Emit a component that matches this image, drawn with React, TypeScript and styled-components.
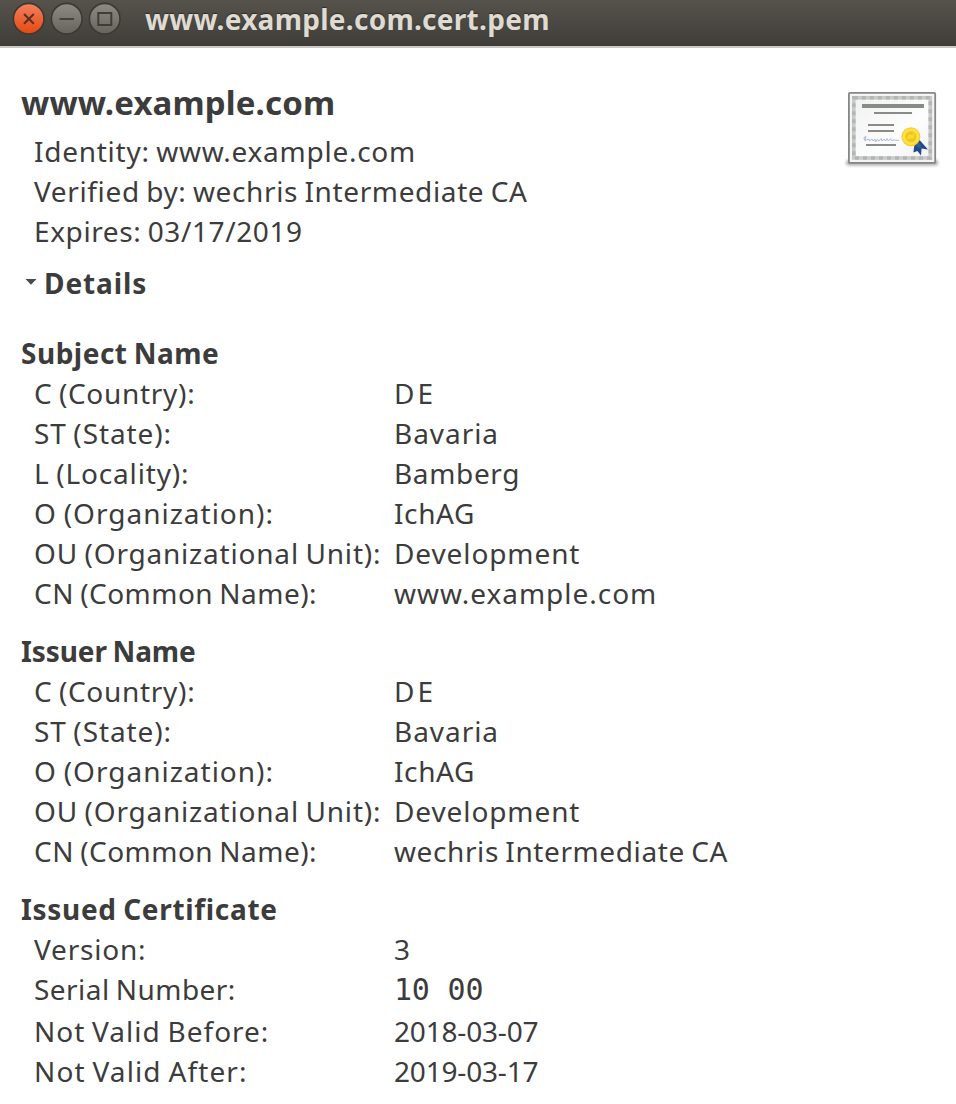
import React from "react";
import styled, { createGlobalStyle } from "styled-components";

const GlobalStyle = createGlobalStyle`
  *, *::before, *::after { box-sizing: border-box; }
  body {
    margin: 0;
    background: #fff;
    color: #3c3c3c;
    font-family: "Noto Sans", "Open Sans", sans-serif;
  }
`;

const Window = styled.div`
  height: 100vh;
  overflow: hidden;
  display: flex;
  flex-direction: column;
  background: #fff;
`;

const TitleBar = styled.header`
  flex: none;
  height: 48px;
  display: flex;
  align-items: flex-start;
  padding: 2px 0 0 12px;
  background: linear-gradient(#56534c, #3f3d38);
  border-bottom: 2px solid #cbc7c4;
`;

const Controls = styled.div`
  display: flex;
  gap: 5px;
`;

const WindowTitle = styled.h1`
  margin: 0 0 0 24px;
  font-size: 28px;
  font-weight: 700;
  line-height: 35px;
  letter-spacing: 0.27px;
  color: #dfdbd2;
  text-shadow: 0 -1px 1px #2d2c28;
  white-space: nowrap;
`;

const Content = styled.main`
  flex: 1;
  padding: 32px 20px 0;
`;

const Summary = styled.div`
  display: flex;
  justify-content: space-between;
`;

const Heading = styled.h2`
  margin: 0 0 6px;
  padding: 1px 0 0 1px;
  font-size: 33px;
  line-height: 44px;
  font-weight: 700;
  letter-spacing: 0.13px;
`;

const CertificatePicture = styled.svg`
  flex: none;
  margin: 8px -4px 0 0;
`;

const Line = styled.div`
  padding-left: 14px;
  line-height: 40px;
  font-size: 28px;
`;

const Text = styled.span<{ $tracking?: number }>`
  letter-spacing: ${(p) => p.$tracking ?? 0}px;
  word-spacing: -1.5px;
  white-space: pre;
`;

const Disclosure = styled.div`
  display: flex;
  align-items: center;
  gap: 7px;
  margin: 12px 0 30px;
  padding-left: 5px;
  height: 40px;
`;

const Arrow = styled.svg`
  flex: none;
  margin-top: -3px;
`;

const DisclosureLabel = styled.span`
  font-size: 28px;
  line-height: 40px;
  font-weight: 700;
  letter-spacing: 0.9px;
`;

const Section = styled.section`
  margin-bottom: 18px;
`;

const SectionTitle = styled.h3`
  margin: 0;
  padding-left: 1px;
  font-size: 28px;
  line-height: 40px;
  font-weight: 700;
`;

const Field = styled.div<{ $height?: number }>`
  display: grid;
  grid-template-columns: 360px 1fr;
  align-items: baseline;
  height: ${(p) => p.$height ?? 40}px;
  padding-left: 14px;
  font-size: 28px;
  line-height: 40px;
`;

const Mono = styled(Text)`
  font-family: "DejaVu Sans Mono", monospace;
  font-size: 30px;
  line-height: 36px;
  word-spacing: 0;
`;

type Tracked = [text: string, tracking: number];

interface FieldData {
  label: Tracked;
  value: Tracked;
  mono?: boolean;
}

interface SectionData {
  title: Tracked;
  fields: FieldData[];
}

const country: FieldData = { label: ["C (Country):", 0.7], value: ["DE", 3] };
const state: FieldData = { label: ["ST (State):", 0.88], value: ["Bavaria", 0.95] };
const organization: FieldData = { label: ["O (Organization):", 1] , value: ["IchAG", 0.6] };
const unit: FieldData = { label: ["OU (Organizational Unit):", 0.8], value: ["Development", 0.9] };

const sections: SectionData[] = [
  {
    title: ["Subject Name", 0.5],
    fields: [
      country,
      state,
      { label: ["L (Locality):", 0.85], value: ["Bamberg", 0.65] },
      organization,
      unit,
      { label: ["CN (Common Name):", 0.47], value: ["www.example.com", 0.97] },
    ],
  },
  {
    title: ["Issuer Name", -0.1],
    fields: [
      country,
      state,
      organization,
      unit,
      { label: ["CN (Common Name):", 0.47], value: ["wechris Intermediate CA", 0.6] },
    ],
  },
  {
    title: ["Issued Certificate", 0.68],
    fields: [
      { label: ["Version:", 0.8], value: ["3", 0] },
      { label: ["Serial Number:", 0.45], value: ["10 00", -0.2] , mono: true },
      { label: ["Not Valid Before:", 1], value: ["2018-03-07", -0.18] },
      { label: ["Not Valid After:", 1.1], value: ["2019-03-17", -0.18] },
    ],
  },
];

const summary: Tracked[] = [
  ["Identity: www.example.com", 0.74],
  ["Verified by: wechris Intermediate CA", 0.63],
  ["Expires: 03/17/2019", 0.6],
];

function ControlButton({ kind }: { kind: "close" | "minimize" | "maximize" }) {
  const close = kind === "close";
  const id = `fill-${kind}`;
  return (
    <svg width="33" height="33" viewBox="0 0 33 33">
      <defs>
        <linearGradient id={id} x1="0" y1="0" x2="0" y2="1">
          <stop offset="0" stopColor={close ? "#f3815f" : "#8d8b83"} />
          <stop offset="1" stopColor={close ? "#e6480f" : "#66645d"} />
        </linearGradient>
      </defs>
      <circle cx="16.7" cy="16.7" r="15.3" fill={`url(#${id})`} stroke="#3b3934" strokeWidth="1.6" />
      <g fill="none" stroke={close ? "#58301f" : "#3f3d38"} strokeWidth="2">
        {kind === "close" && <path d="M12 12 21.8 21.8M21.8 12 12 21.8" strokeWidth="2" />}
        {kind === "minimize" && <path d="M9.5 17H24" strokeWidth="1.8" />}
        {kind === "maximize" && <path d="M10.3 11H23.3V23H10.3Z" />}
      </g>
    </svg>
  );
}

function CertificateIcon() {
  return (
    <CertificatePicture width="96" height="80" viewBox="0 0 96 80">
      <defs>
        <linearGradient id="paper" x1="0" y1="0" x2="1" y2="1">
          <stop offset="0" stopColor="#f1f1f1" />
          <stop offset="0.6" stopColor="#fdfdfd" />
          <stop offset="1" stopColor="#f2f2f2" />
        </linearGradient>
        <filter id="soft" x="-10%" y="-100%" width="120%" height="300%">
          <feGaussianBlur stdDeviation="1.4" />
        </filter>
      </defs>
      <rect x="2" y="72" width="92" height="5.5" rx="2.5" fill="#777" opacity="0.6" filter="url(#soft)" />
      <rect x="4.9" y="4.9" width="86.3" height="70" rx="1" fill="#f4f4f4" stroke="#858783" strokeWidth="1.8" />
      <rect x="9.8" y="9.8" width="76.5" height="60.2" fill="url(#paper)" stroke="#c8caca" strokeWidth="3.6" />
      <rect x="9.8" y="9.8" width="76.5" height="60.2" fill="none" stroke="#b4b6b6" strokeWidth="3.6" strokeDasharray="4 4" />
      <g fill="#898b86">
        <rect x="18" y="16" width="62" height="4" />
        <rect x="30" y="24" width="38" height="2" />
        <rect x="24" y="36" width="26" height="2" />
        <rect x="24" y="42" width="26" height="2" />
        <rect x="22" y="56" width="30" height="2" />
      </g>
      <path
        d="M20.5 52.5 20 49.5 22 48.5 21.2 52.5 25 51 25.5 53 28 51 29 53 31 51 31.5 54 33 51.5 35 53 37 50.5 38 53 40 51 41.5 53 43 50.5 44.5 53 46.5 50.5 47.5 52.5 50 52 55 52.5"
        fill="none"
        stroke="#9db4d6"
        strokeWidth="0.9"
      />
      <path d="M75.5 52 84 61.5 77.6 60.5 77 67.5 73.4 63 69.4 64.5 70.5 56Z" fill="#204a87" />
      <path d="M71.5 57 74.5 60 78 59.5 75.5 54.5Z" fill="#2f5f9f" />
      <circle cx="66.9" cy="48.7" r="8.9" fill="#fce24a" stroke="#f6cf2b" strokeWidth="1.2" />
      <circle cx="66.9" cy="48.7" r="5.6" fill="#f2c71c" />
      <path d="M62.6 51.5 65.3 46.5 68 47.2 70.8 45.2 69.5 50 66 50.8Z" fill="#f9da3c" />
    </CertificatePicture>
  );
}

function FieldRow({ label, value, mono }: FieldData) {
  const Value = mono ? Mono : Text;
  return (
    <Field $height={mono ? 42 : 40}>
      <Text $tracking={label[1]}>{label[0]}</Text>
      <Value $tracking={value[1]}>{value[0]}</Value>
    </Field>
  );
}

export default function App() {
  return (
    <Window>
      <GlobalStyle />
      <TitleBar>
        <Controls>
          <ControlButton kind="close" />
          <ControlButton kind="minimize" />
          <ControlButton kind="maximize" />
        </Controls>
        <WindowTitle>www.example.com.cert.pem</WindowTitle>
      </TitleBar>
      <Content>
        <Summary>
          <div>
            <Heading>www.example.com</Heading>
            {summary.map(([text, tracking]) => (
              <Line key={text}>
                <Text $tracking={tracking}>{text}</Text>
              </Line>
            ))}
          </div>
          <CertificateIcon />
        </Summary>
        <Disclosure>
          <Arrow width="12" height="6" viewBox="0 0 12 6">
            <path d="M0.5 0H11.5L6 5.8Z" fill="#4a4a4a" />
          </Arrow>
          <DisclosureLabel>Details</DisclosureLabel>
        </Disclosure>
        {sections.map(({ title, fields }) => (
          <Section key={title[0]}>
            <SectionTitle>
              <Text $tracking={title[1]}>{title[0]}</Text>
            </SectionTitle>
            {fields.map((field) => (
              <FieldRow key={field.label[0]} {...field} />
            ))}
          </Section>
        ))}
      </Content>
    </Window>
  );
}
